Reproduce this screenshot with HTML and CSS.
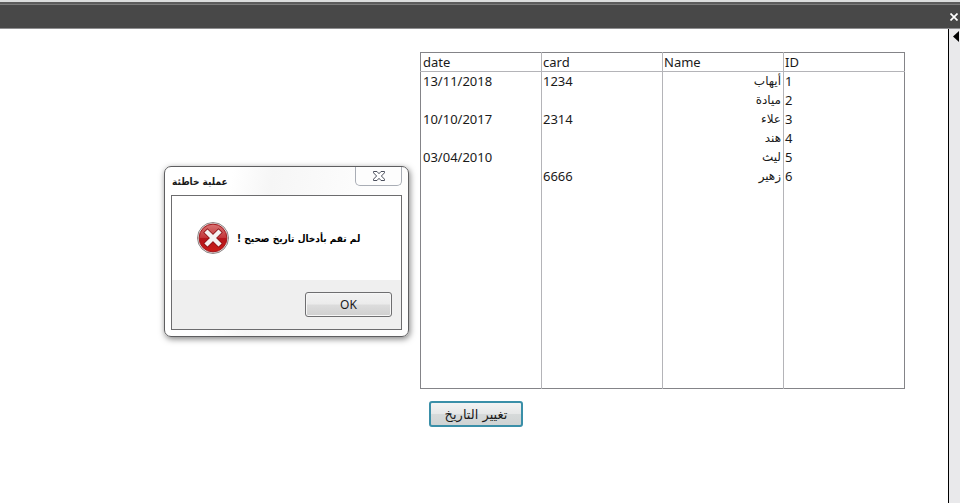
FILE: index.html
```html
<!DOCTYPE html>
<html lang="ar">
<head>
  <meta charset="UTF-8">
  <title>تغيير التاريخ</title>
  <meta name="viewport" content="width=device-width, initial-scale=1.0">
  <link rel="stylesheet" href="styles.css">
</head>
<body>

  <header class="title-bar">
    <button class="bar-close" type="button" aria-label="Close">
      <svg width="8" height="8" viewBox="0 0 8 8"><path d="M0.5 0.5 L7.5 7.5 M7.5 0.5 L0.5 7.5" stroke="#fff" stroke-width="1.7"/></svg>
    </button>
  </header>

  <div class="workspace">
    <main class="form">
      <div class="list">
        <table class="grid">
          <thead>
            <tr><th>date</th><th>card</th><th>Name</th><th>ID</th></tr>
          </thead>
          <tbody>
            <tr><td>13/11/2018</td><td>1234</td><td class="name">أيهاب</td><td>1</td></tr>
            <tr><td></td><td></td><td class="name">ميادة</td><td>2</td></tr>
            <tr><td>10/10/2017</td><td>2314</td><td class="name">علاء</td><td>3</td></tr>
            <tr><td></td><td></td><td class="name">هند</td><td>4</td></tr>
            <tr><td>03/04/2010</td><td></td><td class="name">ليث</td><td>5</td></tr>
            <tr><td></td><td>6666</td><td class="name">زهير</td><td>6</td></tr>
            <tr class="filler"><td></td><td></td><td></td><td></td></tr>
          </tbody>
        </table>
        <button class="change-date" type="button">تغيير التاريخ</button>
      </div>
    </main>

    <aside class="side-pane">
      <button class="pane-toggle" type="button" aria-label="Expand pane">
        <svg width="6" height="11" viewBox="0 0 6 11"><path d="M6 0 V11 L0 5.5 Z" fill="#000"/></svg>
      </button>
    </aside>
  </div>

  <!-- Error message over the form -->
  <div class="dialog" role="alertdialog" aria-labelledby="dialog-title">
    <div class="dialog-head">
      <h1 id="dialog-title" dir="rtl">عملية خاطئة</h1>
      <button class="dialog-close" type="button" aria-label="Close">
        <svg width="12" height="10" viewBox="0 0 12 10">
          <path d="M.5 .5 H4 L6 2.7 L8 .5 H11.5 V1.8 L8.4 5 L11.5 8.2 V9.5 H8 L6 7.3 L4 9.5 H.5 V8.2 L3.6 5 L.5 1.8 Z" fill="#fff" stroke="#4b4f5c" stroke-linejoin="round"/>
        </svg>
      </button>
    </div>
    <div class="dialog-body">
      <div class="message">
        <svg class="error-icon" width="32" height="32" viewBox="0 0 32 32">
          <defs>
            <linearGradient id="red" x1="0" y1="0" x2="0" y2="1">
              <stop offset="0" stop-color="#d87474"/>
              <stop offset=".48" stop-color="#c4383c"/>
              <stop offset=".52" stop-color="#b4151b"/>
              <stop offset="1" stop-color="#cc1c18"/>
            </linearGradient>
          </defs>
          <circle cx="16" cy="16" r="15.5" fill="#e9e4e4" stroke="#8d8585"/>
          <circle cx="16" cy="16" r="13.9" fill="url(#red)" stroke="#a3191d"/>
          <path d="M10.5 10.5 L21.5 21.5 M21.5 10.5 L10.5 21.5" stroke="#8c1418" stroke-width="6" stroke-linecap="square"/>
          <path d="M10.5 10.5 L21.5 21.5 M21.5 10.5 L10.5 21.5" stroke="#f6f2f2" stroke-width="4.4" stroke-linecap="square"/>
        </svg>
        <p dir="rtl">لم تقم بأدخال تاريخ صحيح !</p>
      </div>
      <div class="actions">
        <button class="ok" type="button">OK</button>
      </div>
    </div>
  </div>

</body>
</html>
```
FILE: styles.css
```css
* {
  margin: 0;
  padding: 0;
  box-sizing: border-box;
}

body {
  display: flex;
  flex-direction: column;
  min-height: 100vh;
  background: #fff;
  color: #1a1a1a;
  font-family: "Noto Sans", "DejaVu Sans", sans-serif;
  font-size: 13px;
  line-height: 19px;
}

button {
  font: inherit;
  color: inherit;
}

svg {
  display: block;
}

/* Dark bar at the top */
.title-bar {
  display: flex;
  justify-content: flex-end;
  align-items: center;
  height: 29px;
  padding: 4px 2px 0 0;
  border-top: 2px solid #dcdede;
  border-bottom: 1px solid #8e8e90;
  background: linear-gradient(#5c5c5c 2px, #7c7c7c 2px, #7c7c7c 3px, #484848 3px);
}

.bar-close,
.pane-toggle {
  border: none;
  background: none;
}

/* Form and side pane */
.workspace {
  display: flex;
  flex: 1;
}

.form {
  flex: 1;
  padding: 23px 43px 0 0;
}

.side-pane {
  display: flex;
  justify-content: flex-end;
  align-items: flex-start;
  width: 12px;
  padding: 2px 1px 0 0;
  border-left: 1px solid #000;
  background: #e9e9eb;
}

.list {
  width: 485px;
  margin-left: auto;
}

/* Records */
.grid {
  width: 100%;
  height: 337px;
  table-layout: fixed;
  border-collapse: collapse;
  border: 1px solid #848488;
}

.grid th,
.grid td {
  height: 19px;
  padding: 0 2px 0 1px;
  border-left: 1px solid #b4b4b8;
  font-weight: normal;
  text-align: left;
}

.grid th {
  height: 18px;
  border-bottom: 1px solid #b4b4b8;
  line-height: 18px;
}

.grid th:first-child,
.grid td:first-child {
  padding-left: 2px;
  border-left-color: #848488;
}

.grid .name {
  direction: rtl;
  text-align: right;
  font-family: "DejaVu Sans", sans-serif;
  font-size: 12px;
}

.grid .filler td {
  height: auto;
}

.change-date {
  display: block;
  width: 94px;
  height: 26px;
  margin: 12px 0 0 9px;
  border: 2px solid #3a8fa8;
  border-radius: 3px;
  background: linear-gradient(#f2f3f3, #e6e8e8 48%, #d6dada 52%, #cfd3d3);
  font-family: "DejaVu Sans", sans-serif;
}

/* Message box */
.dialog {
  position: absolute;
  top: 166px;
  left: 164px;
  width: 245px;
  padding: 0 6px 6px;
  border: 1px solid #5e5e60;
  border-radius: 7px;
  background: linear-gradient(100deg, #fff 25%, #f6f6f6 40%, #fdfdfd 75%);
  box-shadow: 1px 2px 6px rgba(0, 0, 0, 0.5);
}

.dialog-head {
  display: flex;
  justify-content: space-between;
  height: 28px;
}

.dialog-head h1 {
  padding: 5px 0 0 1px;
  font-family: "DejaVu Sans Condensed", "DejaVu Sans", sans-serif;
  font-size: 10px;
  font-weight: bold;
}

.dialog-close {
  display: flex;
  justify-content: center;
  align-items: center;
  width: 47px;
  height: 19px;
  border: 1px solid #a9adb5;
  border-top: none;
  border-radius: 0 0 5px 5px;
  background: #fdfdfd;
}

.dialog-body {
  border: 1px solid #6c6c6e;
  background: #fff;
}

.message {
  display: flex;
  align-items: center;
  gap: 8px;
  height: 84px;
  padding-left: 25px;
  color: #000;
  font-family: "DejaVu Sans Condensed", "DejaVu Sans", sans-serif;
  font-size: 10px;
  font-weight: bold;
}

.actions {
  display: flex;
  justify-content: flex-end;
  padding: 12px 9px;
  background: #efefef;
}

.ok {
  width: 87px;
  height: 25px;
  border: 1px solid #6e6e70;
  border-radius: 3px;
  background: linear-gradient(#f2f2f2, #ebebeb 48%, #dcdcdc 52%, #cfcfcf);
  box-shadow: inset 0 0 0 1px #f6f6f6;
  font-size: 12px;
}
```
